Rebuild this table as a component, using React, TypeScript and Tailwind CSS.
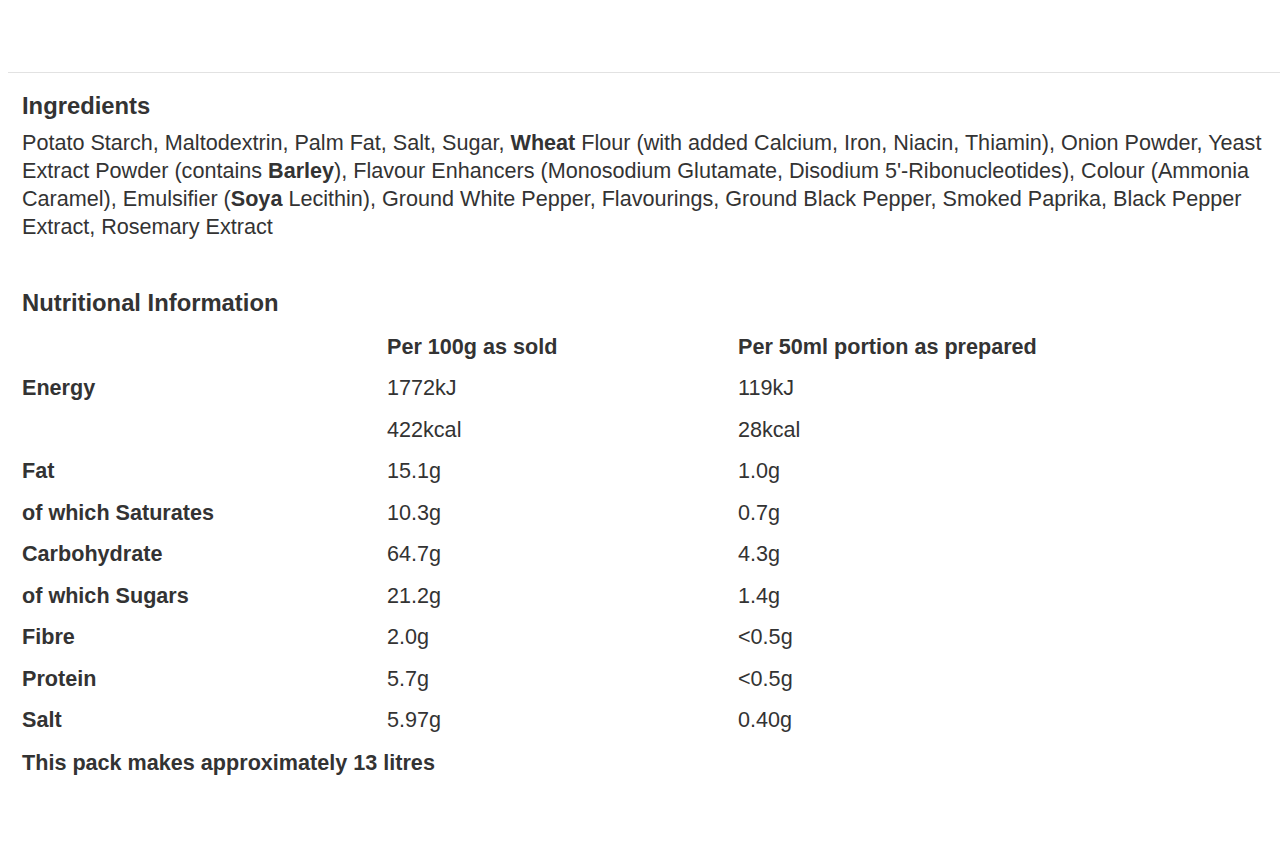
const rows: [string, string, string][] = [
  ['Energy', '1772kJ', '119kJ'],
  ['', '422kcal', '28kcal'],
  ['Fat', '15.1g', '1.0g'],
  ['of which Saturates', '10.3g', '0.7g'],
  ['Carbohydrate', '64.7g', '4.3g'],
  ['of which Sugars', '21.2g', '1.4g'],
  ['Fibre', '2.0g', '<0.5g'],
  ['Protein', '5.7g', '<0.5g'],
  ['Salt', '5.97g', '0.40g'],
];

export default function App() {
  return (
    <div className="min-h-screen bg-white text-[#333] font-['Liberation_Sans',Arial,sans-serif]">
      <div className="h-[72px]" />
      <div className="ml-2 border-t border-[#e2e2e2]" />
      <div className="pl-[22px] pr-[8px] pt-[19px]">
        <h2 className="text-[23.8px] font-bold leading-[28px]">Ingredients</h2>
        <p className="mt-[9px] text-[21.6px] leading-[28px]">
          Potato Starch, Maltodextrin, Palm Fat, Salt, Sugar, <b>Wheat</b> Flour (with added Calcium, Iron, Niacin,
          Thiamin), Onion Powder, Yeast Extract Powder (contains <b>Barley</b>), Flavour Enhancers (Monosodium
          Glutamate, Disodium 5'-Ribonucleotides), Colour (Ammonia Caramel), Emulsifier (<b>Soya</b> Lecithin), Ground
          White Pepper, Flavourings, Ground Black Pepper, Smoked Paprika, Black Pepper Extract, Rosemary Extract
        </p>

        <h2 className="mt-[48px] text-[23.8px] font-bold leading-[28px]">Nutritional Information</h2>
        <table className="mt-[9px] text-[21.6px] leading-[28px]">
          <thead>
            <tr className="h-[41.5px]">
              <th className="w-[365px] p-0" />
              <th className="w-[351px] p-0 text-left font-bold">Per 100g as sold</th>
              <th className="p-0 text-left font-bold">Per 50ml portion as prepared</th>
            </tr>
          </thead>
          <tbody>
            {rows.map(([label, a, b], i) => (
              <tr key={i} className="h-[41.5px]">
                <td className="p-0 font-bold">{label}</td>
                <td className="p-0">{a}</td>
                <td className="p-0">{b}</td>
              </tr>
            ))}
          </tbody>
        </table>
        <p className="mt-[8px] text-[21.6px] font-bold leading-[28px]">This pack makes approximately 13 litres</p>
      </div>
    </div>
  );
}
